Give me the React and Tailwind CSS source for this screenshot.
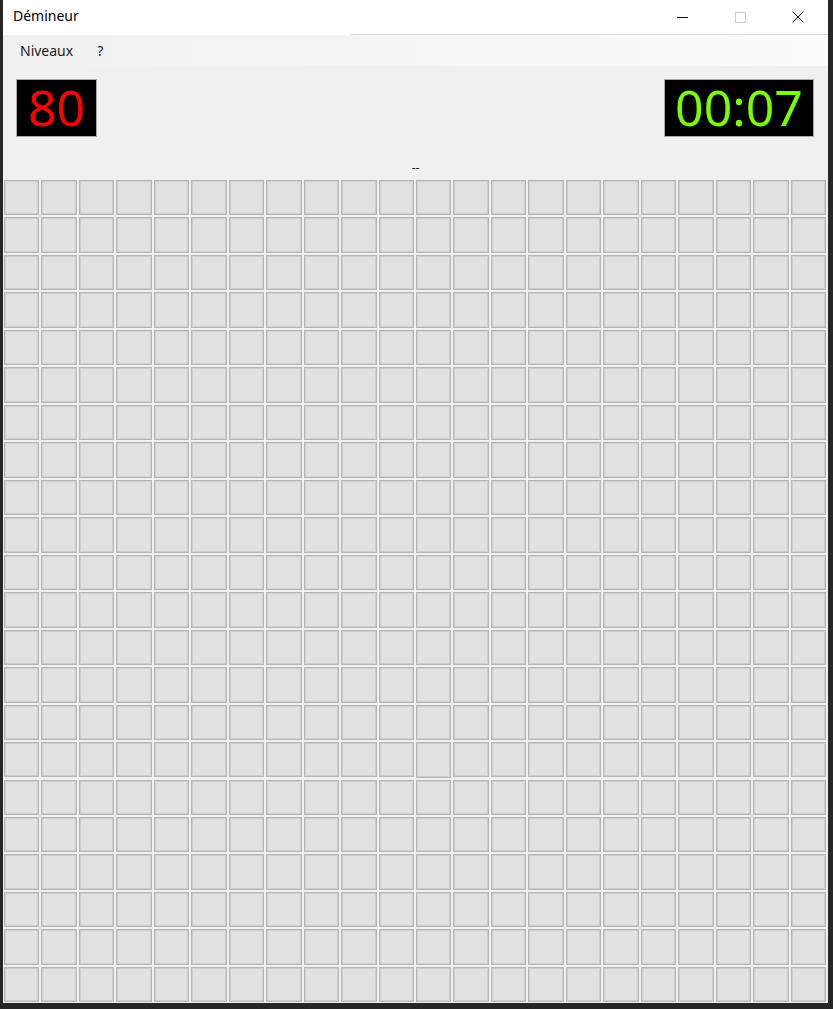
import React from 'react';

// Démineur - Windows-style minesweeper window
const ROWS = 22;
const COLS = 22;

const TitleBar = () => (
  <div className="h-[35px] bg-white flex flex-col">
    <div className="flex-1 flex items-start">
      <span className="pl-[10px] pt-[6px] text-[14px] leading-[20px] text-black">Démineur</span>
      <div className="ml-auto mr-[1px] flex h-full">
        <div className="w-[58px] flex items-center justify-center">
          <svg width="11" height="11" viewBox="0 0 11 11">
            <path d="M0 5.5H11" stroke="#111" strokeWidth="1" />
          </svg>
        </div>
        <div className="w-[58px] flex items-center justify-center">
          <svg width="11" height="11" viewBox="0 0 11 11">
            <rect x="0.5" y="0.5" width="10" height="10" fill="none" stroke="#cccccc" strokeWidth="1" />
          </svg>
        </div>
        <div className="w-[58px] flex items-center justify-center">
          <svg width="12" height="12" viewBox="0 0 12 12">
            <path d="M0.5 0.5L11.5 11.5M11.5 0.5L0.5 11.5" stroke="#111" strokeWidth="1" />
          </svg>
        </div>
      </div>
    </div>
    <div className="h-px ml-[347px] bg-[#dedede]" />
  </div>
);

const MenuBar = () => (
  <div className="h-[31px] flex items-start bg-gradient-to-r from-[#f0f0f0] to-[#fbfbfb] text-[14px] leading-[20px] text-[#1a1a1a]">
    <span className="pl-[17px] pt-[6px]">Niveaux</span>
    <span className="ml-[24px] pt-[6px]">?</span>
  </div>
);

const Display = ({ value, color, width }) => (
  <div
    className={`${width} h-[58px] bg-black border border-[#a9a9a9] flex items-center justify-center pb-[3px] text-[50px] leading-none ${color}`}
  >
    {value}
  </div>
);

const Cell = () => (
  <div className="aspect-square bg-[#e1e1e1] border border-[#b5b5b5] shadow-[inset_0_0_0_1px_#cfcfcf]" />
);

export default function App() {
  const cells = Array.from({ length: ROWS * COLS });

  return (
    <div className="w-[833px] h-[1009px] bg-[#262626] flex items-start" style={{ fontFamily: '"Noto Sans", "Liberation Sans", sans-serif' }}>
      <div className="ml-[3px] w-[825px] h-[1003px] flex flex-col bg-[#f0f0f0]">
        <TitleBar />
        <MenuBar />

        {/* Counters */}
        <div className="flex justify-between px-[13px] pt-[13px] pr-[14px]">
          <Display value="80" color="text-[#ff0000]" width="w-[81px]" />
          <Display value="00:07" color="text-[#7cfc00]" width="w-[150px]" />
        </div>

        {/* Status label */}
        <div className="h-[43px] flex justify-center">
          <span className="pt-[25px] text-[12px] leading-[12px] text-[#222]">--</span>
        </div>

        {/* Board */}
        <div className="ml-[1px] w-[822px] grid grid-cols-[repeat(22,minmax(0,1fr))] gap-[2px]">
          {cells.map((_, i) => (
            <Cell key={i} />
          ))}
        </div>
      </div>
    </div>
  );
}
